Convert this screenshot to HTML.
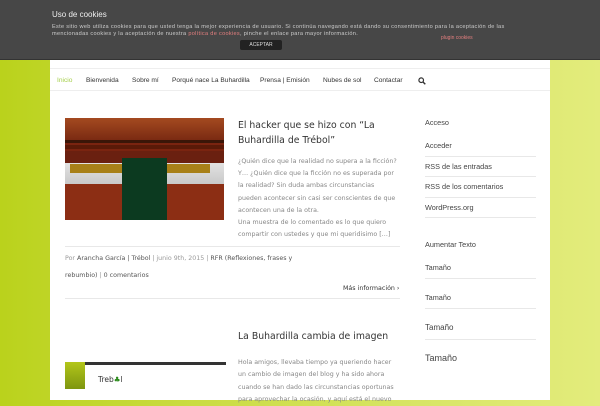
<!DOCTYPE html>
<html><head><meta charset="utf-8"><style>
*{margin:0;padding:0;box-sizing:border-box}
body{width:600px;height:400px;overflow:hidden;position:relative;font-family:"DejaVu Sans","Liberation Sans",sans-serif;background:linear-gradient(90deg,#bad21c 0%,#c9db40 30%,#d8e566 70%,#e3ec7c 100%)}
.wrap{position:absolute;left:50px;top:60px;width:500px;height:340px;background:#fff}
.ck{position:absolute;left:0;top:0;width:600px;height:60px;background:#474747;border-bottom:1px solid #333;color:#ddd}
.a{position:absolute;white-space:nowrap}
.nav{position:absolute;left:50px;top:68px;width:500px;height:23px;border-top:1px solid #eee;border-bottom:1px solid #eee;font-family:"Liberation Sans",sans-serif;font-size:6.6px;color:#333}
.sb{position:absolute;left:425px;font-size:7.3px;color:#444;font-family:"Liberation Sans",sans-serif}
.ln{position:absolute;left:425px;width:111px;height:1px;background:#e8e8e8}
.p{font-size:6.3px;color:#888;line-height:12.2px}
</style></head><body>
<div class="wrap"></div>
<div class="ck">
<div class="a" style="left:52px;top:10px;font-size:8px;color:#eee;font-family:'Liberation Sans',sans-serif">Uso de cookies</div>
<div class="a" style="left:52px;top:24px;font-size:5.6px;line-height:6.5px;color:#ccc;font-family:'Liberation Sans',sans-serif;letter-spacing:0.3px">Este sitio web utiliza cookies para que usted tenga la mejor experiencia de usuario. Si continúa navegando está dando su consentimiento para la aceptación de las<br>mencionadas cookies y la aceptación de nuestra <span style="color:#e47f7f">política de cookies</span>, pinche el enlace para mayor información.</div>
<div class="a" style="left:441px;top:35px;font-size:5px;color:#e47f7f;font-family:'Liberation Sans',sans-serif">plugin cookies</div>
<div class="a" style="left:240px;top:40px;width:42px;height:10px;background:#222;border-radius:2px;font-size:5px;color:#ddd;text-align:center;line-height:10px;font-family:'Liberation Sans',sans-serif">ACEPTAR</div>
</div>
<div class="nav">
<span class="a" style="left:7px;top:8px;color:#a5cf4a">Inicio</span>
<span class="a" style="left:36px;top:8px">Bienvenida</span>
<span class="a" style="left:82px;top:8px">Sobre mí</span>
<span class="a" style="left:122px;top:8px">Porqué nace La Buhardilla</span>
<span class="a" style="left:210px;top:8px">Prensa | Emisión</span>
<span class="a" style="left:273px;top:8px">Nubes de sol</span>
<span class="a" style="left:324px;top:8px">Contactar</span>
<svg class="a" style="left:368px;top:8px" width="8" height="8" viewBox="0 0 8 8"><circle cx="3.2" cy="3.2" r="2.3" fill="none" stroke="#333" stroke-width="1.2"/><line x1="5" y1="5" x2="7.3" y2="7.3" stroke="#333" stroke-width="1.4"/></svg>
</div>
<div class="a" style="left:65px;top:118px;width:159px;height:102px;background:#7a2410">
<div class="a" style="left:0;top:0;width:159px;height:22px;background:linear-gradient(#a44a20,#7a2a12)"></div>
<div class="a" style="left:0;top:22px;width:159px;height:3px;background:#3a1608"></div>
<div class="a" style="left:0;top:27px;width:159px;height:4px;background:#5a1a08"></div>
<div class="a" style="left:0;top:33px;width:159px;height:33px;background:linear-gradient(#f0f0f0,#c9c9c9)"></div>
<div class="a" style="left:0;top:33px;width:159px;height:12px;background:#6a2010"></div>
<div class="a" style="left:5px;top:46px;width:140px;height:9px;background:#a88018"></div>
<div class="a" style="left:0;top:66px;width:159px;height:36px;background:#8c2e14"></div>
<div class="a" style="left:57px;top:40px;width:45px;height:62px;background:#0c3a20"></div>
</div>
<div class="a" style="left:238px;top:118px;font-size:9.3px;line-height:15px;color:#333">El hacker que se hizo con “La<br>Buhardilla de Trébol”</div>
<div class="a p" style="left:238px;top:156px">¿Quién dice que la realidad no supera a la ficción?<br>Y… ¿Quién dice que la ficción no es superada por<br>la realidad? Sin duda ambas circunstancias<br>pueden acontecer sin casi ser conscientes de que<br>acontecen una de la otra.<br>Una muestra de lo comentado es lo que quiero<br>compartir con ustedes y que mi queridisimo […]</div>
<div class="a" style="left:65px;top:246px;width:335px;height:1px;background:#e8e8e8"></div>
<div class="a" style="left:65px;top:250px;font-size:6.3px;color:#555;line-height:17px"><span style="color:#999">Por</span> Arancha García | Trébol <span style="color:#999">| junio 9th, 2015 |</span> RFR (Reflexiones, frases y<br>rebumbio) <span style="color:#999">|</span> 0 comentarios</div>
<div class="a" style="left:343px;top:285px;font-size:6.3px;color:#333">Más información ›</div>
<div class="a" style="left:65px;top:298px;width:335px;height:1px;background:#e8e8e8"></div>
<div class="a" style="left:238px;top:331px;font-size:9.3px;color:#333">La Buhardilla cambia de imagen</div>
<div class="a p" style="left:238px;top:357px;line-height:12.3px">Hola amigos, llevaba tiempo ya queriendo hacer<br>un cambio de imagen del blog y ha sido ahora<br>cuando se han dado las circunstancias oportunas<br>para aprovechar la ocasión, y aquí está el nuevo</div>
<div class="a" style="left:85px;top:362px;width:141px;height:3px;background:#333"></div>
<div class="a" style="left:65px;top:362px;width:20px;height:27px;background:linear-gradient(#b3c61a,#7e9610)"></div>
<div class="a" style="left:98px;top:375px;font-size:7.5px;color:#333">Treb<span style="color:#2a8a1a">♣</span>l</div>
<div class="sb" style="top:118px">Acceso</div>
<div class="sb" style="top:141px">Acceder</div>
<div class="ln" style="top:156px"></div>
<div class="sb" style="top:162px">RSS de las entradas</div>
<div class="ln" style="top:176px"></div>
<div class="sb" style="top:182px">RSS de los comentarios</div>
<div class="ln" style="top:197px"></div>
<div class="sb" style="top:203px">WordPress.org</div>
<div class="ln" style="top:217px"></div>
<div class="sb" style="top:240px">Aumentar Texto</div>
<div class="sb" style="top:263px">Tamaño</div>
<div class="ln" style="top:278px"></div>
<div class="sb" style="top:293px">Tamaño</div>
<div class="ln" style="top:308px"></div>
<div class="sb" style="top:323px;font-size:8px">Tamaño</div>
<div class="ln" style="top:339px"></div>
<div class="sb" style="top:353px;font-size:9px">Tamaño</div>
</body></html>
